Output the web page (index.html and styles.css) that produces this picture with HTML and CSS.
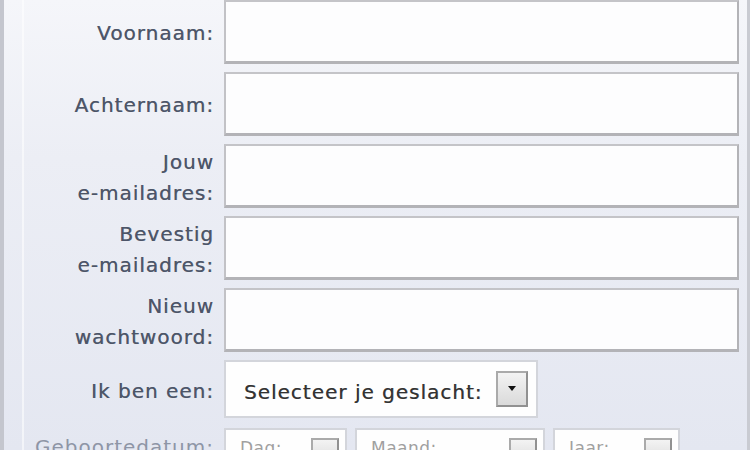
FILE: index.html
```html
<!DOCTYPE html>
<html lang="nl">
<head>
<meta charset="utf-8">
<title>Aanmelden</title>
<link rel="stylesheet" href="styles.css">
</head>
<body>
<div class="panel">
  <form class="form">
    <label class="label">Voornaam:</label>
    <div class="field"><div class="input"></div></div>

    <label class="label">Achternaam:</label>
    <div class="field"><div class="input"></div></div>

    <label class="label">Jouw<br>e-mailadres:</label>
    <div class="field"><div class="input"></div></div>

    <label class="label">Bevestig<br>e-mailadres:</label>
    <div class="field"><div class="input"></div></div>

    <label class="label">Nieuw<br>wachtwoord:</label>
    <div class="field"><div class="input"></div></div>

    <label class="label label-gender">Ik ben een:</label>
    <div class="field field-gender">
      <div class="select select-gender">
        <span class="select-text">Selecteer je geslacht:</span>
        <span class="arrow"><svg width="10" height="6" viewBox="0 0 10 6"><path d="M1 0h8L5 5z" fill="#111"/></svg></span>
      </div>
    </div>

    <label class="label label-date">Geboortedatum:</label>
    <div class="field date">
      <div class="select sel-day"><span class="select-text small">Dag:</span><span class="arrow small-arrow"><svg width="8" height="5" viewBox="0 0 10 6"><path d="M1 0h8L5 5z" fill="#111"/></svg></span></div>
      <div class="select sel-month"><span class="select-text small">Maand:</span><span class="arrow small-arrow"><svg width="8" height="5" viewBox="0 0 10 6"><path d="M1 0h8L5 5z" fill="#111"/></svg></span></div>
      <div class="select sel-year"><span class="select-text small">Jaar:</span><span class="arrow small-arrow"><svg width="8" height="5" viewBox="0 0 10 6"><path d="M1 0h8L5 5z" fill="#111"/></svg></span></div>
    </div>
  </form>
</div>
</body>
</html>
```

FILE: styles.css
```css
html, body {
  margin: 0;
  padding: 0;
  height: 100%;
  overflow: hidden;
}

body {
  background: #e9ebf3;
  font-family: "DejaVu Sans", Verdana, sans-serif;
}

.panel {
  box-sizing: border-box;
  width: 750px;
  height: 450px;
  border-left: 4px solid #c4c6ce;
  border-right: 3px solid #c9cbd2;
  background:
    linear-gradient(to right, transparent 18px, rgba(255,255,255,0.55) 18px, rgba(255,255,255,0.55) 20px, transparent 20px),
    linear-gradient(to bottom, #f5f6fa 0%, #eceef5 35%, #e4e7f1 100%);
  overflow: hidden;
}

.form {
  display: grid;
  grid-template-columns: 210px 515px;
  column-gap: 10px;
  row-gap: 8px;
  grid-template-rows: 64px 64px 64px 64px 64px 60px 40px;
}

.label {
  display: flex;
  align-items: center;
  justify-content: flex-end;
  text-align: right;
  padding-top: 3px;
  font-size: 20px;
  line-height: 31px;
  color: #4c5568;
  letter-spacing: 1px;
  text-shadow: 0.4px 0 0 rgba(76, 85, 104, 0.7);
  white-space: nowrap;
}

.label-date {
  align-items: flex-start;
  padding-top: 4px;
  color: #8e95a6;
  text-shadow: none;
}

.field {
  display: flex;
}

.input {
  flex: 1;
  box-sizing: border-box;
  height: 64px;
  background: #fdfdfe;
  border: 2px solid #b3b3b7;
  border-top-color: #c4c4c8;
  border-left-color: #c2c2c6;
  border-bottom-width: 3px;
}

.select {
  box-sizing: border-box;
  display: flex;
  align-items: center;
  background: #fefefe;
  border: 2px solid #d3d5db;
}

.select-gender {
  width: 314px;
  height: 58px;
  padding: 0 8px 0 18px;
  justify-content: space-between;
}

.select-gender .select-text {
  padding-top: 5px;
}

.select-text {
  font-size: 20px;
  color: #333333;
  letter-spacing: 1px;
  text-shadow: 0.4px 0 0 rgba(51, 51, 51, 0.6);
  white-space: nowrap;
}

.arrow {
  box-sizing: border-box;
  width: 32px;
  height: 36px;
  flex: none;
  display: flex;
  align-items: center;
  justify-content: center;
  background: linear-gradient(to bottom, #f3f3f3, #dadada);
  border: 2px solid #aaaaaa;
  border-right-color: #919191;
  border-bottom-color: #919191;
}

.date {
  gap: 8px;
  align-items: flex-start;
}

.sel-day { width: 123px; }
.sel-month { width: 190px; }
.sel-year { width: 127px; }

.date .select {
  height: 40px;
  padding: 8px 6px 0 14px;
  justify-content: space-between;
  align-items: flex-start;
}

.small {
  font-size: 17px;
  color: #a0a0a0;
  text-shadow: none;
  letter-spacing: 0.5px;
}

.small-arrow {
  width: 28px;
  height: 28px;
}
```
